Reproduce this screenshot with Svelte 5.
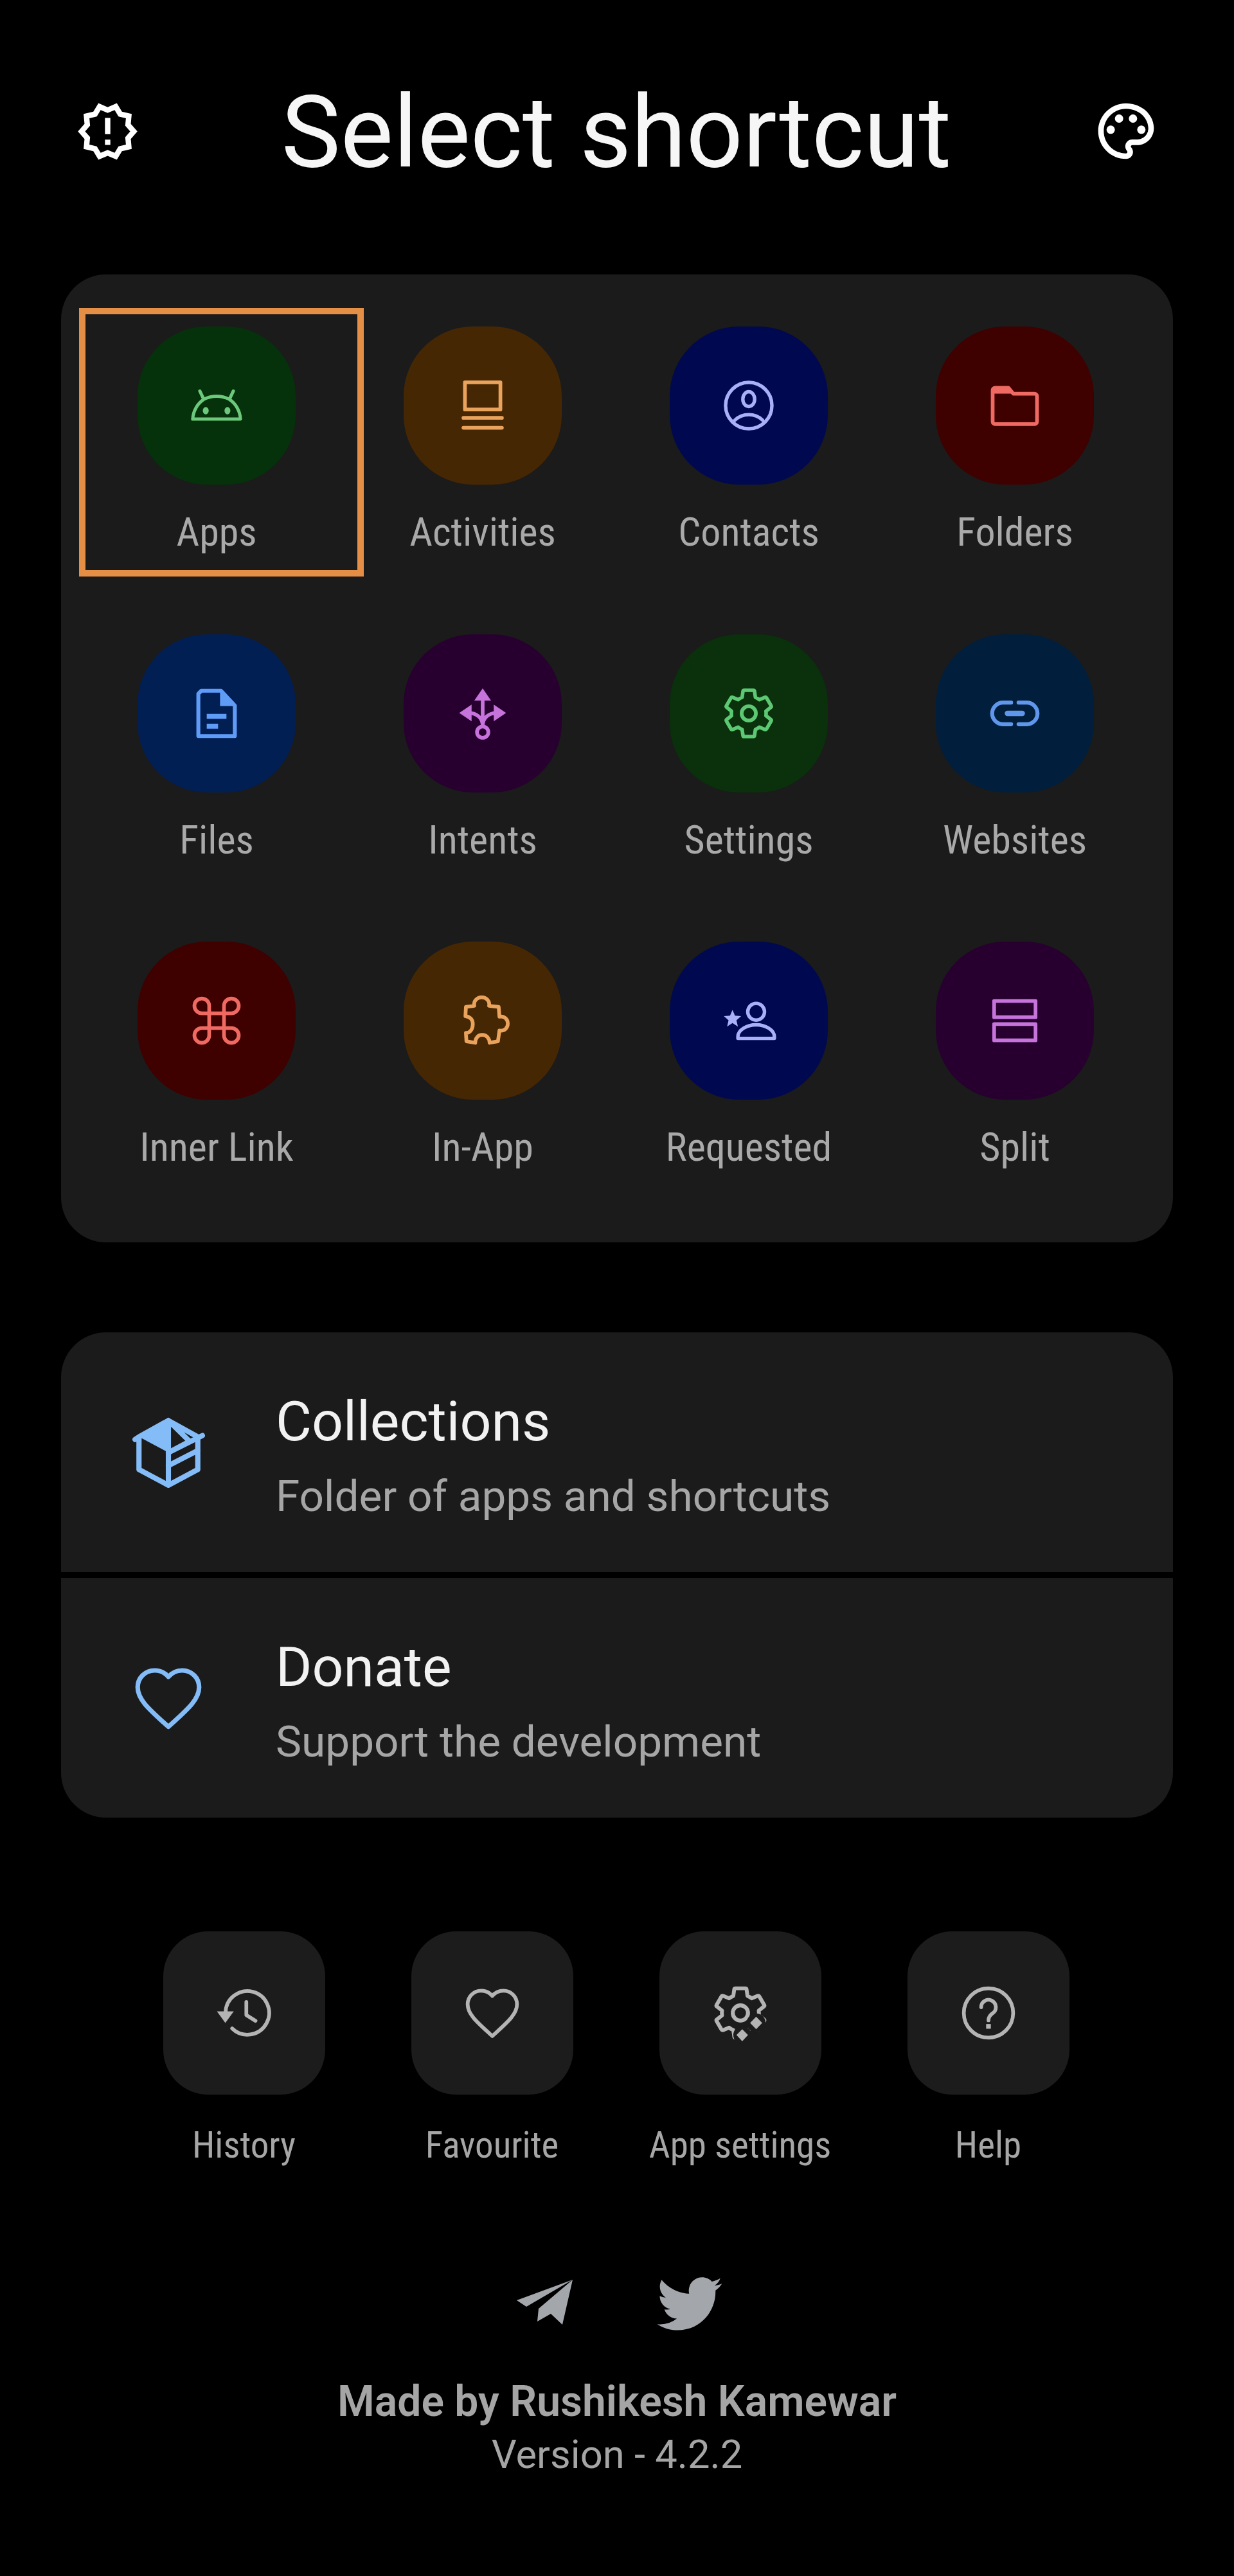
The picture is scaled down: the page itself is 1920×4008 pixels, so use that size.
<script>
  const gearOuter = 'M19.43 12.98c.04-.32.07-.64.07-.98 0-.34-.03-.66-.07-.98l2.11-1.65c.19-.15.24-.42.12-.64l-2-3.46c-.09-.16-.26-.25-.44-.25-.06 0-.12.01-.17.03l-2.49 1c-.52-.4-1.08-.73-1.69-.98l-.38-2.65C14.46 2.18 14.25 2 14 2h-4c-.25 0-.46.18-.49.42l-.38 2.65c-.61.25-1.17.59-1.69.98l-2.49-1c-.06-.02-.12-.03-.18-.03-.17 0-.34.09-.43.25l-2 3.46c-.13.22-.07.49.12.64l2.11 1.65c-.04.32-.07.65-.07.98 0 .33.03.66.07.98l-2.11 1.65c-.19.15-.24.42-.12.64l2 3.46c.09.16.26.25.44.25.06 0 .12-.01.17-.03l2.49-1c.52.4 1.08.73 1.69.98l.38 2.65c.03.24.24.42.49.42h4c.25 0 .46-.18.49-.42l.38-2.65c.61-.25 1.17-.59 1.69-.98l2.49 1c.06.02.12.03.18.03.17 0 .34-.09.43-.25l2-3.46c.12-.22.07-.49-.12-.64l-2.11-1.65z'
  const heartOuter = 'M16.5 3c-1.74 0-3.41.81-4.5 2.09C10.91 3.81 9.24 3 7.5 3 4.42 3 2 5.42 2 8.5c0 3.78 3.4 6.86 8.55 11.54L12 21.35l1.45-1.32C18.6 15.36 22 12.28 22 8.5 22 5.42 19.58 3 16.5 3z'
  const shrink = 'translate(.72 .72) scale(.94)'

  const gearLines = [
    { d: gearOuter, line: 1.55, tf: shrink },
    { d: 'M12 9.1a2.9 2.9 0 1 0 0 5.8 2.9 2.9 0 1 0 0-5.8z', line: 1.5 }
  ]
  const heartLine = [{ d: heartOuter, line: 1.5, tf: shrink }]

  const alert = [{ d: 'M23 12l-2.44-2.78.34-3.68-3.61-.82-1.89-3.18L12 3 8.6 1.54 6.71 4.72l-3.61.81.34 3.68L1 12l2.44 2.78-.34 3.69 3.61.82 1.89 3.18L12 21l3.4 1.46 1.89-3.18 3.61-.82-.34-3.68L23 12zm-4.51 2.11l.26 2.79-2.74.62-1.43 2.41L12 18.82l-2.58 1.11-1.43-2.41-2.74-.62.26-2.8L3.66 12l1.85-2.12-.26-2.78 2.74-.61 1.43-2.41L12 5.18l2.58-1.11 1.43 2.41 2.74.62-.26 2.79L20.34 12l-1.85 2.11zM11 15h2v2h-2zm0-8h2v6h-2z' }]
  const palette = [
    { d: 'M12 22C6.49 22 2 17.51 2 12S6.49 2 12 2s10 4.04 10 9c0 3.31-2.69 6-6 6h-1.77c-.28 0-.5.22-.5.5 0 .12.05.23.13.33.41.47.64 1.06.64 1.67 0 1.38-1.12 2.5-2.5 2.5zm0-18c-4.41 0-8 3.59-8 8s3.59 8 8 8c.28 0 .5-.22.5-.5 0-.16-.08-.28-.14-.35-.41-.46-.63-1.05-.63-1.65 0-1.38 1.12-2.5 2.5-2.5H16c2.21 0 4-1.79 4-4 0-3.86-3.59-7-8-7z' },
    { d: 'M6.5 10a1.5 1.5 0 1 0 0 3 1.5 1.5 0 1 0 0-3zM9.5 6a1.5 1.5 0 1 0 0 3 1.5 1.5 0 1 0 0-3zM14.5 6a1.5 1.5 0 1 0 0 3 1.5 1.5 0 1 0 0-3zM17.5 10a1.5 1.5 0 1 0 0 3 1.5 1.5 0 1 0 0-3z' }
  ]

  const shortcuts = [
    { label: 'Apps', bg: '#05320b', fg: '#6cc97c', icon: [
      { d: 'M17.2 9.5l1.6-3.4M6.8 9.5L5.2 6.1M6.8 9.5C4.2 11.2 2.5 14.2 2.3 17.5h19.4c-.2-3.3-1.9-6.3-4.5-8-3.2-1.7-7.2-1.7-10.4 0z', line: 1.3 },
      { d: 'M7.6 12.6a1.2 1.5 0 1 0 0 3 1.2 1.5 0 1 0 0-3zM16.4 12.6a1.2 1.5 0 1 0 0 3 1.2 1.5 0 1 0 0-3z' }
    ] },
    { label: 'Activities', bg: '#462703', fg: '#e9a35c', icon: [
      { d: 'M4.8 2.6h14.4v11H4.8zM4.2 17h15.6M4.2 21h15.6', line: 1.5 }
    ] },
    { label: 'Contacts', bg: '#00094f', fg: '#a9b0f7', icon: [
      { d: 'M12 2.6a9.4 9.4 0 1 0 0 18.8 9.4 9.4 0 1 0 0-18.8z', line: 1.4 },
      { d: 'M12 6.4a2.4 3 0 1 0 0 6 2.4 3 0 1 0 0-6z', line: 1.4 },
      { d: 'M6.4 17.9c1.5-1.4 3.5-2.2 5.6-2.2s4.1.8 5.6 2.2', line: 1.4 }
    ] },
    { label: 'Folders', bg: '#3f0000', fg: '#ee6a62', icon: [
      { d: 'M3 5.8a1 1 0 0 1 1-1h5.4l2 2.4H20a1 1 0 0 1 1 1V18.5a1 1 0 0 1-1 1H4a1 1 0 0 1-1-1z', line: 1.5 },
      { d: 'M3 5.8a1 1 0 0 1 1-1h5.4l2 2.4H3z' }
    ] },
    { label: 'Files', bg: '#021f54', fg: '#5f9cf7', icon: [
      { d: 'M5.8 2.8H13.8L19.4 8.8V21.2H4.6V4z', line: 1.6 },
      { d: 'M13.4 2.8l6 6.2h-6z' },
      { d: 'M8 12.2h8v2H8zM8 16.2h4.6v2H8z' }
    ] },
    { label: 'Intents', bg: '#27002f', fg: '#c673dc', icon: [
      { d: 'M12 5v12M12 17c0-3.2-2.4-5.2-6-5.2M12 17c0-3.2 2.4-5.2 6-5.2', line: 1.5 },
      { d: 'M12 1.8l3.4 5h-6.8zM2.5 11.8l5-3.4v6.8zM21.5 11.8l-5-3.4v6.8z' },
      { d: 'M12 17.3a2.3 2.3 0 1 0 0 4.6 2.3 2.3 0 1 0 0-4.6z', line: 1.5 }
    ] },
    { label: 'Settings', bg: '#0a300c', fg: '#5dc873', icon: gearLines },
    { label: 'Websites', bg: '#011f3c', fg: '#6097ec', icon: [
      { d: 'M10.5 7.6H7.2a4.4 4.4 0 0 0 0 8.8H10.5M13.5 7.6H16.8a4.4 4.4 0 0 1 0 8.8H13.5', line: 1.6 },
      { d: 'M9 12h6', line: 2.2 }
    ] },
    { label: 'Inner Link', bg: '#3f0000', fg: '#ee6a62', icon: [
      { d: 'M15 6v12a3 3 0 1 0 3-3H6a3 3 0 1 0 3 3V6a3 3 0 1 0-3 3h12a3 3 0 1 0-3-3', line: 1.5 }
    ] },
    { label: 'In-App', bg: '#462703', fg: '#e9a35c', icon: [
      { d: 'M8.6 6C8.2 4 9.8 2.5 11.6 2.5 13.4 2.5 15 4 14.6 6l3.9.4.3 4c2-.4 3.4 1.1 3.4 2.8 0 1.8-1.4 3.2-3.4 2.8l-.6 4.4-3.4.6c0-2-1.4-3.2-3-3.2s-2.8 1.2-2.8 3.2l-3.6-.6-.2-3.4c1.8 0 2.8-1.6 2.8-3.6 0-1.8-1-3-3-3.2l.2-3.8z', line: 1.5 }
    ] },
    { label: 'Requested', bg: '#00094f', fg: '#a9b0f7', icon: [
      { d: 'M15 5a3.4 3.4 0 1 0 0 6.8 3.4 3.4 0 1 0 0-6.8zM7.6 19.2V18.5c0-2.8 3.7-4.8 7.4-4.8s7.4 2 7.4 4.8v.7z', line: 1.4 },
      { d: 'M5.4 7.6l1 2.4 2.5.2-1.9 1.7.6 2.5-2.2-1.4-2.2 1.4.6-2.5-1.9-1.7 2.5-.2z' }
    ] },
    { label: 'Split', bg: '#27002f', fg: '#c673dc', icon: [
      { d: 'M3.6 4h16.8v6.6H3.6zM3.6 13.4h16.8V20H3.6z', line: 1.5 }
    ] }
  ]

  const menu = [
    { title: 'Collections', sub: 'Folder of apps and shortcuts', icon: [
      { d: 'M12 2.2L3 7.2 12 12z' },
      { d: 'M12 2.2l9 5v10l-9 4.8-9-4.8v-10zM12 12v10M12 12l10.4-5.2M12 16l9-4.6M3 7.2L1.8 8M12 2.2v9.8l6.5-3.4z', line: 1.6 }
    ] },
    { title: 'Donate', sub: 'Support the development', icon: heartLine }
  ]

  const quick = [
    { label: 'History', icon: [
      { d: 'M4.9 12a8.3 8.3 0 1 1 2.5 5.9M12.8 7.8v5l3.5 2.2', line: 1.4 },
      { d: 'M1.6 11.4h6.4l-3.2 4.4z' }
    ] },
    { label: 'Favourite', icon: heartLine },
    { label: 'App settings', icon: [
      ...gearLines,
      { d: 'M18 12.2a3.6 3.6 0 1 0 0 7.2 3.6 3.6 0 1 0 0-7.2zM12.7 17a3.4 3.4 0 1 0 0 6.8 3.4 3.4 0 1 0 0-6.8z', patch: true },
      { d: 'M18 13.4l2.3 2.4-2.3 2.4-2.3-2.4zM12.7 18.2l2.2 2.2-2.2 2.4-2.2-2.4z' }
    ] },
    { label: 'Help', icon: [
      { d: 'M12 2.6a9.4 9.4 0 1 0 0 18.8 9.4 9.4 0 1 0 0-18.8zM9.2 9.8a2.8 2.8 0 1 1 4.4 2.3c-1 .7-1.6 1.4-1.6 2.7', line: 1.4 },
      { d: 'M11.1 16.2h1.8v1.8h-1.8z' }
    ] }
  ]
</script>

{#snippet glyph(paths, cls)}
  <svg class={cls} viewBox="0 0 24 24">
    {#each paths as p}
      {#if p.line}
        <path d={p.d} transform={p.tf} fill="none" stroke="currentColor" stroke-width={p.line} stroke-linejoin="round" stroke-linecap="round" />
      {:else if p.patch}
        <path d={p.d} fill="#1c1c1c" />
      {:else}
        <path d={p.d} fill="currentColor" fill-rule="evenodd" />
      {/if}
    {/each}
  </svg>
{/snippet}

<div class="page">
  <header class="top">
    {@render glyph(alert, 'alert-icon')}
    <h1>Select shortcut</h1>
    {@render glyph(palette, 'palette-icon')}
  </header>

  <section class="card shortcuts">
    {#each shortcuts as s}
      <div class="cell">
        <div class="blob" style="background:{s.bg};color:{s.fg}">
          {@render glyph(s.icon, 'blob-icon')}
        </div>
        <span class="cell-label">{s.label}</span>
      </div>
    {/each}
    <div class="focus-ring"></div>
  </section>

  <section class="card menu">
    {#each menu as m}
      <div class="menu-row">
        <div class="menu-slot">
          {@render glyph(m.icon, 'menu-icon')}
        </div>
        <div class="menu-text">
          <div class="menu-title">{m.title}</div>
          <div class="menu-sub">{m.sub}</div>
        </div>
      </div>
    {/each}
  </section>

  <section class="quick">
    {#each quick as q}
      <div class="quick-item">
        <div class="tile">
          {@render glyph(q.icon, 'tile-icon')}
        </div>
        <span class="quick-label">{q.label}</span>
      </div>
    {/each}
  </section>

  <div class="social">
    <svg class="telegram" viewBox="0 0 100 80">
      <path d="M92 5L5 37l15 10zM92 5L39 50l-2 20 21-12 18 17z" fill="currentColor" />
    </svg>
    <svg class="twitter" viewBox="0 0 24 24">
      <path d="M22.46 6c-.77.35-1.6.58-2.46.69.88-.53 1.56-1.37 1.88-2.38-.83.5-1.75.85-2.72 1.05C18.37 4.5 17.26 4 16 4c-2.35 0-4.27 1.92-4.27 4.29 0 .34.04.67.11.98C8.28 9.09 5.11 7.38 3 4.79c-.37.63-.58 1.37-.58 2.15 0 1.49.75 2.81 1.91 3.56-.71 0-1.37-.2-1.95-.5v.03c0 2.08 1.48 3.82 3.44 4.21a4.22 4.22 0 0 1-1.93.07 4.28 4.28 0 0 0 4 2.98 8.521 8.521 0 0 1-5.33 1.84c-.34 0-.68-.02-1.02-.06C3.44 20.29 5.7 21 8.12 21 16 21 20.33 14.46 20.33 8.79c0-.19 0-.37-.01-.56.84-.6 1.56-1.36 2.14-2.23z" fill="currentColor" />
    </svg>
  </div>

  <footer class="credits">
    <div class="made">Made by Rushikesh Kamewar</div>
    <div class="version">Version - 4.2.2</div>
  </footer>
</div>

<style>
  :global(body) {
    margin: 0;
    background: #000;
  }

  .page {
    width: 1920px;
    height: 4008px;
    background: #000;
    overflow: hidden;
    font-family: Roboto, "Liberation Sans", sans-serif;
  }

  .top {
    height: 408px;
    margin-bottom: 19px;
    padding: 0 116px 0 117px;
    box-sizing: border-box;
    display: flex;
    align-items: center;
    justify-content: space-between;
    color: #fff;
  }

  .top h1 {
    margin: 5px 0 0;
    font-size: 155px;
    font-weight: 400;
    line-height: 1;
    color: #f6f6f6;
  }

  :global(.alert-icon) {
    width: 101px;
    height: 101px;
  }

  :global(.palette-icon) {
    width: 104px;
    height: 104px;
  }

  .card {
    margin: 0 95px;
    background: #1b1b1b;
    border-radius: 70px;
  }

  .shortcuts {
    position: relative;
    height: 1506px;
    box-sizing: border-box;
    padding: 81px 35px 0;
    display: grid;
    grid-template-columns: repeat(4, 414px);
    grid-auto-rows: 478.5px;
  }

  .cell {
    display: flex;
    flex-direction: column;
    align-items: center;
  }

  .blob {
    width: 246px;
    height: 246px;
    border-radius: 108px;
    display: flex;
    align-items: center;
    justify-content: center;
  }

  :global(.blob-icon) {
    width: 92px;
    height: 92px;
  }

  .cell-label {
    margin-top: 39px;
    font-size: 62px;
    line-height: 70px;
    color: #a9a9a9;
    font-stretch: 85%;
    white-space: nowrap;
  }

  .focus-ring {
    position: absolute;
    left: 28px;
    top: 52px;
    width: 443px;
    height: 418px;
    box-sizing: border-box;
    border: 10px solid #e58e45;
  }

  .menu {
    margin-top: 140px;
    background: #000;
    display: flex;
    flex-direction: column;
    gap: 9px;
    overflow: hidden;
  }

  .menu-row {
    height: 373px;
    background: #1b1b1b;
    display: flex;
    align-items: center;
  }

  .menu-slot {
    width: 334px;
    display: flex;
    justify-content: center;
    color: #84bcf8;
  }

  :global(.menu-icon) {
    width: 122px;
    height: 122px;
  }

  .menu-text {
    padding-top: 20px;
  }

  .menu-title {
    font-size: 86px;
    font-weight: 450;
    line-height: 116px;
    color: #f2f2f2;
  }

  .menu-sub {
    font-size: 67.5px;
    line-height: 116px;
    color: #a6a6a6;
  }

  .quick {
    margin-top: 177px;
    padding-right: 3px;
    display: flex;
    justify-content: center;
  }

  .quick-item {
    width: 386px;
    display: flex;
    flex-direction: column;
    align-items: center;
  }

  .tile {
    width: 252px;
    height: 254px;
    border-radius: 70px;
    background: #1c1c1c;
    display: flex;
    align-items: center;
    justify-content: center;
    color: #b4b4b4;
  }

  :global(.tile-icon) {
    width: 98px;
    height: 98px;
  }

  .quick-label {
    margin-top: 44px;
    font-size: 57px;
    line-height: 70px;
    color: #a6a6a6;
    font-stretch: 85%;
    white-space: nowrap;
  }

  .social {
    margin-top: 164px;
    padding-left: 10px;
    height: 90px;
    display: flex;
    align-items: center;
    justify-content: center;
    gap: 116px;
    color: #a3a6ab;
  }

  .telegram {
    width: 100px;
    height: 80px;
  }

  .twitter {
    width: 116px;
    height: 116px;
  }

  .credits {
    margin-top: 68px;
    text-align: center;
    line-height: 83px;
    color: #a5a5a5;
  }

  .made {
    font-size: 66px;
    font-weight: 600;
  }

  .version {
    font-size: 61.5px;
  }
</style>
